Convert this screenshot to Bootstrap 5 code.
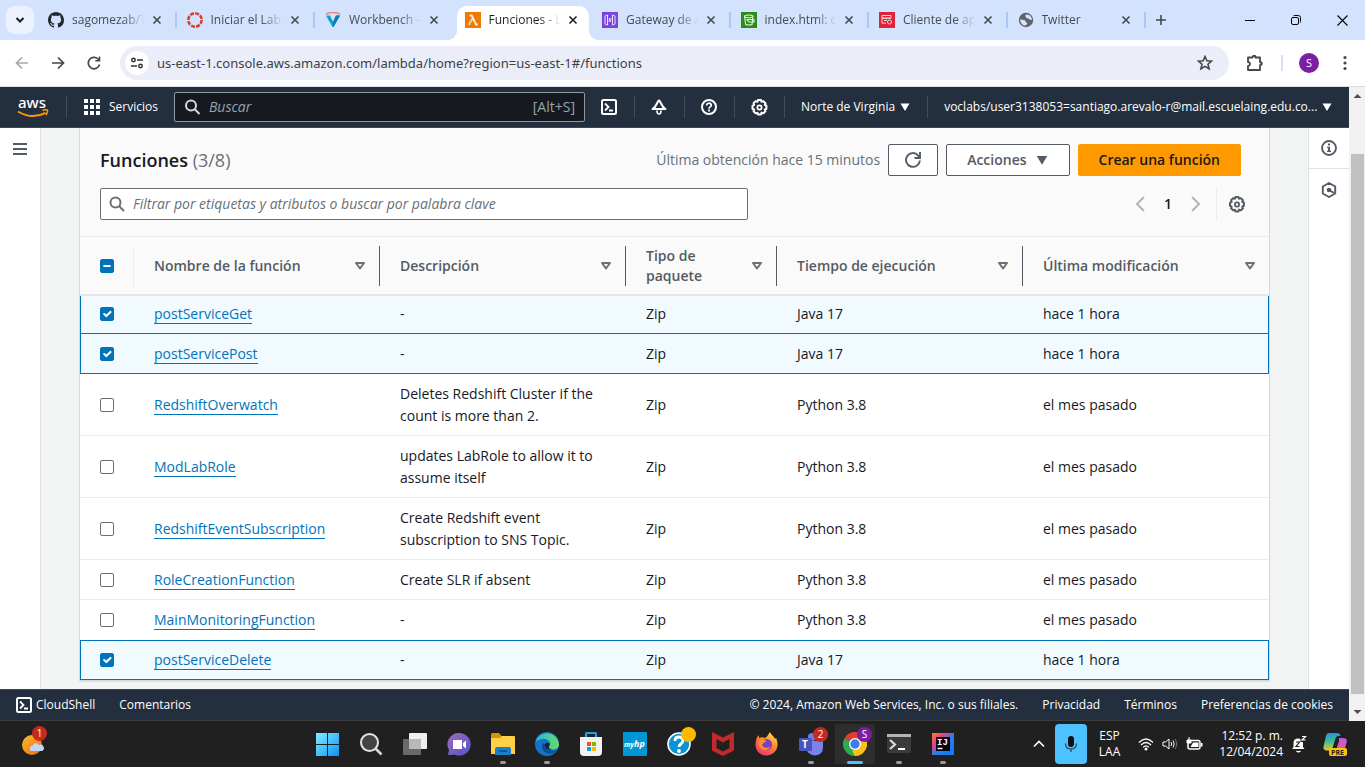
<!DOCTYPE html>
<html lang="es">
<head>
<meta charset="utf-8">
<meta name="viewport" content="width=device-width, initial-scale=1">
<title>Funciones - Lambda</title>
<link rel="stylesheet" href="https://cdn.jsdelivr.net/npm/bootstrap@5.3.0/dist/css/bootstrap.min.css">
<style>
  :root { --squid:#232f3e; --blue:#0073bb; --grey:#545b64; --ink:#16191f; --line:#eaeded; }
  body { font-family:"Open Sans","Noto Sans",sans-serif; font-size:14px; line-height:22px; color:var(--ink); background:#fff; }
  svg { display:block; flex:none; }
  button { color:inherit; }
  .plain { border:0; background:none; padding:0; display:flex; align-items:center; justify-content:center; flex:none; }

  /* browser tabs */
  .tabstrip { height:40px; background:#d3e3fd; font-size:12px; }
  .tab-search { width:28px; height:28px; border-radius:9px; background:#ebf2fe; margin:0 6px; }
  .tabs { display:grid; grid-template-columns:repeat(8,minmax(0,1fr)); min-width:0; }
  .tab-item { height:16px; padding:0 8px; margin-right:2px; border-right:2px solid transparent; position:relative; color:#474b50; }
  .tab-item.sep { border-right-color:#a8c7fa; }
  .tab-item .title { flex:1; min-width:0; margin-left:8px; overflow:hidden; white-space:nowrap; -webkit-mask-image:linear-gradient(90deg,#000 66%,transparent 94%); mask-image:linear-gradient(90deg,#000 66%,transparent 94%); line-height:20px; }
  .tab-item .closer { width:16px; height:16px; margin-right:2px; color:#45494d; }
  .tab-item.current { background:#fff; height:34px; align-self:flex-end; border:0; border-radius:10px 10px 0 0; padding-bottom:6px; color:#1f2023; margin:0 5px 0 1px; }
  .tab-item.current .closer { margin-right:0; color:#1f2023; }
  .tab-item.current::before, .tab-item.current::after { content:""; position:absolute; bottom:0; width:10px; height:10px; }
  .tab-item.current::before { right:100%; background:radial-gradient(circle at 0 0,transparent 10px,#fff 10px); }
  .tab-item.current::after { left:100%; background:radial-gradient(circle at 100% 0,transparent 10px,#fff 10px); }
  .win-tools { width:217px; flex:none; }
  .win-btn { width:46px; height:40px; color:#000; }

  /* address bar */
  .addressbar { height:47px; border-bottom:1px solid #dadce0; padding:0 10px 0 4px; }
  .nav-btn { width:36px; height:34px; color:#474747; }
  .omnibox { height:34px; border-radius:17px; background:#ebeef8; margin-left:8px; padding:0 16px 0 5px; min-width:0; }
  .site-info { width:24px; height:24px; border-radius:50%; background:#fff; margin-right:8px; }
  .url { border:0; background:none; outline:0; flex:1; min-width:0; padding:0; font-family:"Noto Sans",sans-serif; font-size:13px; color:#3c3f45; }
  .bar-rule { width:2px; height:16px; background:#d3e3fd; }
  .avatar { width:20px; height:20px; border-radius:50%; background:#7b1fa2; color:#fff; font-size:11px; line-height:20px; }

  /* console header and footer */
  .aws-bar { height:41px; background:var(--squid); color:#fff; font-size:12px; border-bottom:1px solid #414750; }
  .aws-bar .plain { font-weight:500; }
  .aws-bar .rule { width:1px; height:22px; background:#414d5c; flex:none; }
  .aws-bar .tool { width:49px; }
  .aws-search { width:411px; flex:none; height:30px; background:#161a20; border:1px solid #8d9ba0; border-radius:2px; padding:0 9px; color:#95a5a6; font-size:14px; }
  .aws-search input { background:none; border:0; outline:0; color:inherit; flex:1; min-width:0; padding:0; }
  .aws-search input::placeholder, .filter input::placeholder { font-style:italic; color:inherit; opacity:1; }
  .aws-foot { height:32px; background:var(--squid); border-top:1px solid #414750; border-bottom:1px solid #3b3b3b; color:#fff; font-size:12px; font-weight:500; padding:0 16px; }
  .aws-foot a, .aws-foot button { color:#fff; text-decoration:none; font-weight:500; }

  /* console body */
  .rail { width:41px; flex:none; color:var(--grey); }
  .rail .plain { width:100%; height:41px; }
  .canvas { background:#f2f3f3; padding:0 39px; min-width:0; }
  .panel { background:#fff; box-shadow:0 0 0 1px #d5dbdb,0 1px 1px 0 rgba(0,28,36,.5); }
  .panel-top { background:#fafafa; border-bottom:1px solid var(--line); padding:16px 20px; }
  .panel-top h1 { font-size:18px; line-height:22px; font-weight:600; margin:0; }
  .panel-top h1 span { font-weight:400; color:#687078; }
  .panel-top .fetched { color:#687078; }
  .panel-row { margin-bottom:12px; }
  .aws-btn { height:32px; border:1px solid var(--grey); border-radius:2px; background:#fff; color:var(--grey); font-size:14px; font-weight:600; line-height:20px; padding:0 20px; }
  .aws-btn.icon-only { padding:0 16px; }
  .aws-btn.main-action { background:#f90; border-color:#f90; color:var(--ink); }
  .filter { width:648px; height:32px; border:1px solid #687078; border-radius:2px; background:#fff; padding:0 8px; color:#687078; }
  .filter input { border:0; outline:0; flex:1; min-width:0; padding:0; background:none; color:inherit; }
  .pager { gap:14px; }
  .pager .pages { gap:18px; }
  .pager .rule { width:1px; height:32px; background:var(--line); }

  .fn-table { width:100%; table-layout:fixed; border-collapse:separate; border-spacing:0; }
  .fn-table th { background:#fafafa; color:var(--grey); font-weight:600; line-height:20px; height:59px; padding:9px 0 8px; border-bottom:2px solid #e4e7e7; }
  .fn-table th > div { height:40px; padding:0 13px 0 20px; border-right:1px solid var(--grey); }
  .fn-table th:first-child > div { border-color:var(--line); }
  .fn-table th:last-child > div { border:0; }
  .fn-table td { padding:9px 20px 8px; border-bottom:1px solid var(--line); vertical-align:middle; }
  .fn-table td:first-child { padding-right:0; }
  .fn-table tr.picked td { background:#f1faff; border-bottom-color:var(--blue); }
  .fn-table tr.picked td:first-child { border-left:1px solid var(--blue); padding-left:19px; }
  .fn-table tr.picked td:last-child { border-right:1px solid var(--blue); }
  .fn-table tbody tr:first-child td { padding-top:7px; }
  .fn-table tr.before-picked td { border-bottom:0; padding-bottom:9px; }
  .fn-table tr.before-picked + tr td { border-top:1px solid var(--blue); padding-top:8px; }
  .fn-table td a { color:var(--blue); text-decoration:none; border-bottom:1px solid var(--blue); }
  .fn-table .form-check-input { display:block; width:14px; height:14px; margin:0; border:1px solid #687078; border-radius:2px; box-shadow:none; }
  .fn-table .form-check-input:checked, .fn-table .form-check-input:indeterminate { background-color:var(--blue); border-color:var(--blue); background-size:14px 14px; }

  .scrollbar-col { width:16px; flex:none; background:#f1f1f1; }
  .scrollbar-col .above { flex:50 0 0; }
  .scrollbar-col .below { flex:10 0 0; }
  .scrollbar-col .thumb { flex:539 0 0; margin:0 1px 0 2px; background:#c1c1c1; }

  /* taskbar */
  .taskbar { height:46px; background:#202020; color:#fff; font-size:12px; line-height:16px; }
  .zone-start { flex:305 1 0; }
  .zone-end { flex:400 0 0; }
  .weather { margin-left:22px; }
  .app { width:44px; height:46px; position:relative; }
  .app.open::after { content:""; position:absolute; bottom:3px; left:19px; width:6px; height:3px; border-radius:2px; background:#9a9a9a; }
  .app.active { background:linear-gradient(#2d2d2d,#2d2d2d) center/40px 40px no-repeat; }
  .app.active::after { left:14px; width:16px; background:#4cc2ff; }
  .pin { position:absolute; border-radius:50%; width:15px; height:15px; font-size:10px; line-height:15px; text-align:center; color:#fff; top:6px; right:5px; }
  .pin.alert-red { background:#c42b1c; }
  .pin.yellow { background:#ffb900; }
  .pin.violet { background:#7b1fa2; }
  .weather .pin { top:-6px; right:-1px; }
  .mic { width:32px; height:40px; border-radius:4px; background:#4cc2ff; margin:0 12px 0 10px; }
  .status { margin:0 16px 0 18px; }
  .snooze { margin:0 16px 0 8px; }
  .copilot { margin-right:18px; }
</style>
</head>
<body class="d-flex flex-column vh-100 overflow-hidden">

<svg width="0" height="0" class="position-absolute">
  <symbol id="x" viewBox="0 0 16 16"><path d="M4.500 4.500l7 7M11.500 4.500l-7 7" stroke="currentColor" stroke-width="1.600" fill="none"/></symbol>
  <symbol id="down" viewBox="0 0 12 10"><path d="M1.500 1.500h9L6 9z" fill="currentColor"/></symbol>
  <symbol id="sort" viewBox="0 0 12 10"><path d="M2 2h8L6 7.500z" fill="none" stroke="#687078" stroke-width="2" stroke-linejoin="round"/></symbol>
  <symbol id="lens" viewBox="0 0 16 16"><circle cx="6.500" cy="6.500" r="5" fill="none" stroke="currentColor" stroke-width="2"/><path d="M10 10l5 5" stroke="currentColor" stroke-width="2"/></symbol>
  <symbol id="gear" viewBox="0 0 16 16"><path d="M6.600 1h2.800l.5 1.600 1.700-.6 2 2-.7 1.500 1.600.8v2.900l-1.600.8.7 1.500-2 2-1.700-.7-.5 1.700H6.600L6 12.900l-1.600.6-2-2L3 10l-1.600-.8V6.400L3 5.600 2.400 4l2-2 1.700.6z" fill="none" stroke="currentColor" stroke-width="1.900" stroke-linejoin="round"/><circle cx="8" cy="8" r="2" fill="none" stroke="currentColor" stroke-width="1.600"/></symbol>
  <symbol id="shell" viewBox="0 0 16 16"><rect x="1" y="1" width="14" height="14" rx="1.500" fill="none" stroke="currentColor" stroke-width="2"/><path d="M4 4.500L7.500 8 4 11.500M8 11.500h4" fill="none" stroke="currentColor" stroke-width="1.800"/></symbol>
</svg>

<header>
  <div class="tabstrip d-flex align-items-center">
    <button class="plain tab-search" aria-label="Buscar pestañas"><svg width="12" height="12" viewBox="0 0 12 12"><path d="M2.500 4L6 7.500 9.500 4" fill="none" stroke="#1f1f1f" stroke-width="2"/></svg></button>
    <div class="tabs align-items-center flex-grow-1 h-100">
      <div class="tab-item sep d-flex align-items-center">
        <svg width="16" height="16" viewBox="0 0 16 16"><path fill="#24292f" d="M8 0C3.580 0 0 3.580 0 8c0 3.540 2.290 6.530 5.470 7.590.4.070.55-.17.55-.38 0-.19-.01-.82-.01-1.490-2.010.37-2.530-.49-2.690-.94-.09-.23-.48-.94-.82-1.130-.28-.15-.68-.52-.01-.53.63-.01 1.080.58 1.230.82.72 1.210 1.870.87 2.330.66.070-.52.28-.87.51-1.070-1.780-.2-3.640-.89-3.640-3.950 0-.87.31-1.590.82-2.150-.08-.2-.36-1.020.08-2.120 0 0 .67-.21 2.200.82.64-.18 1.320-.27 2-.27s1.360.09 2 .27c1.530-1.040 2.200-.82 2.200-.82.44 1.100.16 1.920.08 2.120.51.56.82 1.270.82 2.150 0 3.070-1.870 3.750-3.650 3.950.29.25.54.73.54 1.480 0 1.070-.01 1.930-.01 2.200 0 .21.15.46.55.38A8.010 8.010 0 0 0 16 8c0-4.420-3.580-8-8-8z"/></svg>
        <span class="title">sagomezab/T</span><button class="plain closer" aria-label="Cerrar"><svg width="16" height="16"><use href="#x"/></svg></button>
      </div>
      <div class="tab-item sep d-flex align-items-center">
        <svg width="16" height="16" viewBox="0 0 16 16"><circle cx="8" cy="8" r="6.700" fill="none" stroke="#e13b30" stroke-width="2.600" stroke-dasharray="4 1.260"/></svg>
        <span class="title">Iniciar el Lab</span><button class="plain closer" aria-label="Cerrar"><svg width="16" height="16"><use href="#x"/></svg></button>
      </div>
      <div class="tab-item d-flex align-items-center">
        <svg width="16" height="16" viewBox="0 0 16 16"><path d="M1 2Q8-1 15 2" stroke="#f4845f" stroke-width="1.500" fill="none"/><path d="M1 3.500h4L8 10l3-6.500h4L8.500 15h-1z" fill="#0aa0d6"/><path d="M8 10l3-6.500h4L8.500 15H8z" fill="#0b7fae"/></svg>
        <span class="title">Workbench -</span><button class="plain closer" aria-label="Cerrar"><svg width="16" height="16"><use href="#x"/></svg></button>
      </div>
      <div class="tab-item current d-flex align-items-center">
        <svg width="16" height="16" viewBox="0 0 16 16"><path fill="#ee7a05" d="M0 0h16v16H0z"/><path d="M4.500 3.500h2.200L11 12.500h1.800M7.300 7L4 12.800" fill="none" stroke="#ffe9d0" stroke-width="2"/><path d="M7.300 8.200L4.800 12.500" stroke="#ee7a05" stroke-width=".7"/></svg>
        <span class="title">Funciones - L</span><button class="plain closer" aria-label="Cerrar"><svg width="16" height="16"><use href="#x"/></svg></button>
      </div>
      <div class="tab-item sep d-flex align-items-center">
        <svg width="16" height="16" viewBox="0 0 16 16"><path fill="#7a45dc" d="M0 0h16v16H0z"/><path d="M5.500 3L3 4v8l2.500 1zM10.500 3L13 4v8l-2.500 1zM7.500 6l-.5 4M9 6l-.5 4" fill="none" stroke="#e6d9ff" stroke-width="1"/></svg>
        <span class="title">Gateway de A</span><button class="plain closer" aria-label="Cerrar"><svg width="16" height="16"><use href="#x"/></svg></button>
      </div>
      <div class="tab-item sep d-flex align-items-center">
        <svg width="16" height="16" viewBox="0 0 16 16"><path fill="#2f8a1e" d="M0 0h16v16H0z"/><path d="M3.500 4q4.500-2 8.500 0l-1 8.500q-3 1-6.300 0zM3.500 5q4.500 1.500 8.500 0M6 7.500h7v2.500H8z" fill="none" stroke="#e4f5d8" stroke-width="1.100"/></svg>
        <span class="title">index.html: c</span><button class="plain closer" aria-label="Cerrar"><svg width="16" height="16"><use href="#x"/></svg></button>
      </div>
      <div class="tab-item sep d-flex align-items-center">
        <svg width="16" height="16" viewBox="0 0 16 16"><path fill="#dd2438" d="M0 0h16v16H0z"/><path d="M3 3.500h9v2.700H3zM3 6.200v5h4M5 8.500h3M3 6.200h9" fill="none" stroke="#ffd0d4" stroke-width="1"/><circle cx="10.500" cy="10" r="2" fill="none" stroke="#ffd0d4"/></svg>
        <span class="title">Cliente de ap</span><button class="plain closer" aria-label="Cerrar"><svg width="16" height="16"><use href="#x"/></svg></button>
      </div>
      <div class="tab-item sep d-flex align-items-center">
        <svg width="16" height="16" viewBox="0 0 16 16"><circle cx="8" cy="8" r="7.200" fill="#5f6368"/><path d="M2 7.500c2 0 3 .5 4.500.5 1.500.5.500 2 2 2.500S9 13 7 13.500c-2.500 0-4.500-2.500-5-6zM8 2.500c-1.500 1.500 0 2 0 3 1 1.500 3 .5 3.500 2l2.500.500c0-2.500-1.500-4.500-3.500-5.300z" fill="#d3e3fd"/></svg>
        <span class="title">Twitter</span><button class="plain closer" aria-label="Cerrar"><svg width="16" height="16"><use href="#x"/></svg></button>
      </div>
    </div>
    <div class="win-tools d-flex align-items-center justify-content-between">
      <button class="plain ms-1" aria-label="Nueva pestaña"><svg width="18" height="16" viewBox="0 0 18 16"><path d="M9 3v10M4 8h10" stroke="#474747" stroke-width="1.600"/></svg></button>
      <div class="d-flex">
        <button class="plain win-btn" aria-label="Minimizar"><svg width="10" height="10"><path d="M0 5.500h10" stroke="#000"/></svg></button>
        <button class="plain win-btn" aria-label="Restaurar"><svg width="10" height="10" viewBox="0 0 10 10"><rect x=".5" y="2.500" width="7" height="7" rx="1.500" fill="none" stroke="#000"/><path d="M2.500 1c0-.3.300-.5.800-.5h4A2.200 2.200 0 0 1 9.500 2.700v4c0 .5-.2.800-.5.800" fill="none" stroke="#000"/></svg></button>
        <button class="plain win-btn" aria-label="Cerrar ventana"><svg width="11" height="11"><path d="M.5.5l10 10M10.500.5l-10 10" stroke="#000" stroke-width="1.100"/></svg></button>
      </div>
    </div>
  </div>

  <div class="addressbar d-flex align-items-center">
    <button class="plain nav-btn" aria-label="Atrás"><svg width="16" height="16" viewBox="0 0 16 16"><path d="M14 8H3M8 2.500L2.500 8 8 13.500" fill="none" stroke="#a7a9ad" stroke-width="1.700"/></svg></button>
    <button class="plain nav-btn" aria-label="Adelante"><svg width="16" height="16" viewBox="0 0 16 16"><path d="M2 8h11M8 2.500L13.500 8 8 13.500" fill="none" stroke="currentColor" stroke-width="1.700"/></svg></button>
    <button class="plain nav-btn" aria-label="Recargar"><svg width="16" height="16" viewBox="0 0 16 16"><path d="M13.500 9.500A5.700 5.700 0 1 1 12 4l1.500 1.500" fill="none" stroke="currentColor" stroke-width="1.700"/><path d="M14.300 1.500v5H9.300V5h3.400V1.500z" fill="currentColor"/></svg></button>
    <div class="omnibox d-flex align-items-center flex-grow-1">
      <button class="plain site-info" aria-label="Información del sitio"><svg width="14" height="14" viewBox="0 0 14 14"><g fill="none" stroke="#303030" stroke-width="1.500"><circle cx="3.500" cy="4" r="1.700"/><path d="M7 4h6M1 10h6"/><circle cx="10.500" cy="10" r="1.700"/></g></svg></button>
      <input class="url" type="text" aria-label="Dirección" value="us-east-1.console.aws.amazon.com/lambda/home?region=us-east-1#/functions">
      <button class="plain" aria-label="Marcador"><svg width="16" height="16" viewBox="0 0 16 16"><path d="M8 1.500l1.900 4.300 4.700.4-3.600 3 1.100 4.600L8 11.400l-4.100 2.400L5 9.200l-3.600-3 4.700-.4z" fill="none" stroke="#474747" stroke-width="1.600"/></svg></button>
    </div>
    <button class="plain ms-3" aria-label="Extensiones"><svg width="20" height="18" viewBox="0 0 20 18"><path d="M3 3.500h4.500a1.500 1.500 0 0 1 3 0H15V8a1.600 1.600 0 0 1 0 3.200V16H3v-4a2 2 0 0 0 0-4z" fill="none" stroke="#474747" stroke-width="1.800" stroke-linejoin="round"/><path d="M7.500 3a2 2 0 0 1 4 0zM15.500 7.500a2 2 0 0 1 0 4z" fill="#474747"/></svg></button>
    <span class="bar-rule ms-3 me-3"></span>
    <button class="plain avatar" aria-label="Perfil">S</button>
    <button class="plain ms-3" aria-label="Menú"><svg width="20" height="16" viewBox="0 0 20 16"><g fill="#474747"><circle cx="10" cy="2.500" r="1.600"/><circle cx="10" cy="8" r="1.600"/><circle cx="10" cy="13.500" r="1.600"/></g></svg></button>
  </div>
</header>

<div class="d-flex flex-grow-1 overflow-hidden">
  <div class="d-flex flex-column flex-grow-1 overflow-hidden">
    <nav class="aws-bar d-flex align-items-center flex-shrink-0">
      <a href="#" aria-label="AWS" class="ms-3"><svg width="34" height="30" viewBox="0 -4 34 30" font-family="Noto Sans" font-weight="500"><text x="2" y="12" font-size="15" fill="#fff">aws</text><path d="M2 15.500Q16 24 29.500 16.800" fill="none" stroke="#f90" stroke-width="2"/><path d="M26.500 14.200q4.500-1 5 0t-1.500 5" fill="none" stroke="#f90" stroke-width="1.600"/></svg></a>
      <span class="rule ms-3"></span>
      <button class="plain gap-2 ms-3"><svg width="18" height="16" viewBox="0 0 18 16"><path fill="#fff" d="M1 0h4v4H1zM7 0h4v4H7zM13 0h4v4h-4zM1 6h4v4H1zM7 6h4v4H7zM13 6h4v4h-4zM1 12h4v4H1zM7 12h4v4H7zM13 12h4v4h-4z"/></svg>Servicios</button>
      <label class="aws-search d-flex align-items-center gap-2 ms-3"><svg width="17" height="16" color="#d5dbdb"><use href="#lens"/></svg><input type="search" placeholder="Buscar" aria-label="Buscar"><span>[Alt+S]</span></label>
      <button class="plain tool" aria-label="CloudShell"><svg width="16" height="16"><use href="#shell"/></svg></button><span class="rule"></span>
      <button class="plain tool" aria-label="Notificaciones"><svg width="18" height="18" viewBox="0 0 18 18"><path d="M9 2.500c2 .8 2 6 6.500 8.500h-13C7 8.500 7 3.300 9 2.500z" fill="none" stroke="#fff" stroke-width="2" stroke-linejoin="round"/><path d="M7 12.500q0 3.500 2 3.500t2-3.500" fill="none" stroke="#fff" stroke-width="1.600"/></svg></button><span class="rule"></span>
      <button class="plain tool" aria-label="Ayuda"><svg width="16" height="16" viewBox="0 0 16 16"><circle cx="8" cy="8" r="7" fill="none" stroke="#fff" stroke-width="2"/><path d="M5.700 6.500C5.700 3.500 10.300 3.500 10.300 6.300 10.300 8 8 7.800 8 9.700" fill="none" stroke="#fff" stroke-width="1.700"/><path d="M7.100 10.600h1.800v1.800H7.100z" fill="#fff"/></svg></button><span class="rule"></span>
      <button class="plain tool" aria-label="Configuración"><svg width="17" height="17"><use href="#gear"/></svg></button><span class="rule"></span>
      <button class="plain gap-1 ms-3">Norte de Virginia <svg width="12" height="10"><use href="#down"/></svg></button>
      <span class="rule ms-3 me-3"></span>
      <button class="plain gap-1">voclabs/user3138053=santiago.arevalo-r@mail.escuelaing.edu.co... <svg width="12" height="10"><use href="#down"/></svg></button>
    </nav>

    <div class="d-flex flex-grow-1 overflow-hidden">
      <aside class="rail border-end">
        <button class="plain" aria-label="Menú"><svg width="14" height="12" viewBox="0 0 14 12"><path d="M0 1h14M0 6h14M0 11h14" stroke="#545b64" stroke-width="2"/></svg></button>
      </aside>
      <main class="canvas flex-grow-1">
        <section class="panel">
          <div class="panel-top">
            <div class="panel-row d-flex align-items-center gap-2 me-2">
              <h1 class="me-auto">Funciones <span>(3/8)</span></h1>
              <span class="fetched text-nowrap">Última obtención hace 15 minutos</span>
              <button class="plain aws-btn icon-only" aria-label="Actualizar"><svg width="16" height="16" viewBox="0 0 16 16"><path d="M14.800 8.500A6.900 6.900 0 1 1 13 3.300l1.300 1.500" fill="none" stroke="#545b64" stroke-width="1.900"/><path d="M15 0v6H9.500" fill="none" stroke="#545b64" stroke-width="1.900"/></svg></button>
              <button class="plain aws-btn gap-2">Acciones <svg width="14" height="12"><use href="#down"/></svg></button>
              <button class="plain aws-btn main-action">Crear una función</button>
            </div>
            <div class="d-flex align-items-center justify-content-between">
              <label class="filter d-flex align-items-center gap-2"><svg width="16" height="16"><use href="#lens"/></svg><input type="search" placeholder="Filtrar por etiquetas y atributos o buscar por palabra clave" aria-label="Filtrar funciones"></label>
              <div class="pager d-flex align-items-center">
                <div class="pages d-flex align-items-center">
                  <button class="plain" aria-label="Anterior"><svg width="12" height="16" viewBox="0 0 12 16"><path d="M10 1L3 8l7 7" fill="none" stroke="#aab7b8" stroke-width="1.900"/></svg></button>
                  <button class="plain fw-semibold" aria-current="page">1</button>
                  <button class="plain" aria-label="Siguiente"><svg width="12" height="16" viewBox="0 0 12 16"><path d="M2 1l7 7-7 7" fill="none" stroke="#aab7b8" stroke-width="1.900"/></svg></button>
                </div>
                <div class="d-flex align-items-center gap-2"><span class="rule"></span>
                <button class="plain" aria-label="Preferencias"><svg width="24" height="17" color="#545b64"><use href="#gear"/></svg></button></div>
              </div>
            </div>
          </div>

          <table class="fn-table">
            <colgroup><col style="width:54px"><col><col><col style="width:151px"><col><col></colgroup>
            <thead>
              <tr>
                <th><div class="d-flex align-items-center"><input class="form-check-input" type="checkbox" id="all" aria-label="Seleccionar todo"></div></th>
                <th><div class="d-flex align-items-center justify-content-between">Nombre de la función<svg width="12" height="10"><use href="#sort"/></svg></div></th>
                <th><div class="d-flex align-items-center justify-content-between">Descripción<svg width="12" height="10"><use href="#sort"/></svg></div></th>
                <th><div class="d-flex align-items-center justify-content-between"><span>Tipo de<br>paquete</span><svg width="12" height="10"><use href="#sort"/></svg></div></th>
                <th><div class="d-flex align-items-center justify-content-between">Tiempo de ejecución<svg width="12" height="10"><use href="#sort"/></svg></div></th>
                <th><div class="d-flex align-items-center justify-content-between">Última modificación<svg width="12" height="10"><use href="#sort"/></svg></div></th>
              </tr>
            </thead>
            <tbody>
              <tr class="picked"><td><input class="form-check-input" type="checkbox" checked aria-label="postServiceGet"></td><td><a href="#">postServiceGet</a></td><td>-</td><td>Zip</td><td>Java 17</td><td>hace 1 hora</td></tr>
              <tr class="picked"><td><input class="form-check-input" type="checkbox" checked aria-label="postServicePost"></td><td><a href="#">postServicePost</a></td><td>-</td><td>Zip</td><td>Java 17</td><td>hace 1 hora</td></tr>
              <tr><td><input class="form-check-input" type="checkbox" aria-label="RedshiftOverwatch"></td><td><a href="#">RedshiftOverwatch</a></td><td>Deletes Redshift Cluster if the count is more than 2.</td><td>Zip</td><td>Python 3.8</td><td>el mes pasado</td></tr>
              <tr><td><input class="form-check-input" type="checkbox" aria-label="ModLabRole"></td><td><a href="#">ModLabRole</a></td><td>updates LabRole to allow it to assume itself</td><td>Zip</td><td>Python 3.8</td><td>el mes pasado</td></tr>
              <tr><td><input class="form-check-input" type="checkbox" aria-label="RedshiftEventSubscription"></td><td><a href="#">RedshiftEventSubscription</a></td><td>Create Redshift event subscription to SNS Topic.</td><td>Zip</td><td>Python 3.8</td><td>el mes pasado</td></tr>
              <tr><td><input class="form-check-input" type="checkbox" aria-label="RoleCreationFunction"></td><td><a href="#">RoleCreationFunction</a></td><td>Create SLR if absent</td><td>Zip</td><td>Python 3.8</td><td>el mes pasado</td></tr>
              <tr class="before-picked"><td><input class="form-check-input" type="checkbox" aria-label="MainMonitoringFunction"></td><td><a href="#">MainMonitoringFunction</a></td><td>-</td><td>Zip</td><td>Python 3.8</td><td>el mes pasado</td></tr>
              <tr class="picked"><td><input class="form-check-input" type="checkbox" checked aria-label="postServiceDelete"></td><td><a href="#">postServiceDelete</a></td><td>-</td><td>Zip</td><td>Java 17</td><td>hace 1 hora</td></tr>
            </tbody>
          </table>
        </section>
      </main>
      <aside class="rail border-start">
        <button class="plain border-bottom" aria-label="Información"><svg width="16" height="16" viewBox="0 0 16 16"><circle cx="8" cy="8" r="7" fill="none" stroke="currentColor" stroke-width="1.900"/><path d="M7 3.500h2v2H7zM6 6.700h3v4h1v1.400H6v-1.400h1V8H6z" fill="currentColor"/></svg></button>
        <button class="plain" aria-label="Tutoriales"><svg width="16" height="16" viewBox="0 0 16 16"><path d="M8 1l6.200 3.500v7L8 15l-6.200-3.500v-7z" fill="none" stroke="currentColor" stroke-width="1.900" stroke-linejoin="round"/><circle cx="8" cy="8" r="2.300" fill="currentColor"/><path d="M8 8l5 3" stroke="currentColor" stroke-width="1.900"/></svg></button>
      </aside>
    </div>

    <footer class="aws-foot d-flex align-items-center flex-shrink-0">
      <button class="plain gap-1"><svg width="16" height="16"><use href="#shell"/></svg>CloudShell</button>
      <a href="#" class="ms-4 me-auto">Comentarios</a>
      <span>© 2024, Amazon Web Services, Inc. o sus filiales.</span>
      <a href="#" class="ms-4">Privacidad</a>
      <a href="#" class="ms-4">Términos</a>
      <a href="#" class="ms-4">Preferencias de cookies</a>
    </footer>
  </div>
  <div class="scrollbar-col d-flex flex-column align-items-stretch" aria-hidden="true">
    <svg width="16" height="17" viewBox="0 0 16 17"><path d="M4.500 11L8.500 7l4 4z" fill="#505050"/></svg>
    <span class="above"></span><span class="thumb"></span><span class="below"></span>
    <svg width="16" height="17" viewBox="0 0 16 17"><path d="M4.500 6L8.500 10l4-4z" fill="#505050"/></svg>
  </div>
</div>

<div class="taskbar d-flex align-items-center flex-shrink-0">
  <div class="zone-start">
    <button class="plain weather position-relative" aria-label="El tiempo"><svg width="24" height="24" viewBox="0 0 24 24"><defs><linearGradient id="sun" x2="1" y2="1"><stop stop-color="#fbbf2e"/><stop offset="1" stop-color="#ea6a10"/></linearGradient></defs><circle cx="10" cy="13" r="10" fill="url(#sun)"/><path d="M10 19a2.500 2.500 0 0 1 .5-5 3.500 3.500 0 0 1 6.500-1 3 3 0 0 1 3 6z" fill="#c3d6f5"/></svg><span class="pin alert-red">1</span></button>
  </div>
  <div class="d-flex">
    <button class="plain app" aria-label="Inicio"><svg width="24" height="24" viewBox="0 0 24 24"><defs><linearGradient id="win" x2="1" y2="1"><stop stop-color="#7df0ff"/><stop offset="1" stop-color="#0f90f5"/></linearGradient></defs><path fill="url(#win)" d="M1 1h11v11H1zM13 1h11v11H13zM1 13h11v11H1zM13 13h11v11H13z"/></svg></button>
    <button class="plain app" aria-label="Buscar"><svg width="24" height="24" viewBox="0 0 24 24"><circle cx="10.500" cy="10.500" r="8.500" fill="#444" stroke="#e4e4e4" stroke-width="2"/><path d="M16.500 16.500l6 6" stroke="#d6d6d6" stroke-width="2.600"/></svg></button>
    <button class="plain app" aria-label="Vista de tareas"><svg width="24" height="24" viewBox="0 0 24 24"><rect x="6" y="1" width="18" height="16" rx="1" fill="#efefef"/><rect y="7" width="18" height="16" rx="1" fill="#6a6a6a"/><path d="M6 7h12v10H6z" fill="#b9b9b9"/></svg></button>
    <button class="plain app" aria-label="Chat"><svg width="24" height="24" viewBox="0 0 24 24"><defs><linearGradient id="chat" x2="1" y2="1"><stop stop-color="#a06ab8"/><stop offset="1" stop-color="#4f55c8"/></linearGradient></defs><path d="M12 1a11.300 11.300 0 1 1-4 21.700L1 23l1-5A11.300 11.300 0 0 1 12 1z" fill="url(#chat)"/><path d="M6 8h9v9H6zM16 11l3-2.500v8L16 14z" fill="#fff"/></svg></button>
    <button class="plain app open" aria-label="Explorador"><svg width="24" height="24" viewBox="0 0 24 24"><path d="M0 2.500q0-1.500 1.500-1.500H8l2.500 3H23v6H0z" fill="#d99400"/><path d="M0 6h9l2-2h12q1 0 1 1v17H0z" fill="#ffcf48"/><path d="M4 23v-6q0-2 2-2h12q2 0 2 2v6z" fill="#1a7fc4"/><path d="M8 19h8" stroke="#0c5a94" stroke-width="2"/></svg></button>
    <button class="plain app open" aria-label="Edge"><svg width="24" height="24" viewBox="0 0 24 24"><defs><linearGradient id="edge" x2="1"><stop stop-color="#27b4e8"/><stop offset="1" stop-color="#69dc61"/></linearGradient></defs><circle cx="12" cy="12" r="12" fill="#1173c9"/><path d="M.5 10A12 12 0 0 1 24 12c0 4-3 5.500-6 5.500-4 0-5-2-3.500-3.700C17 10.500 12 6 7 7 3.500 7.700 1.500 9 .5 10z" fill="url(#edge)"/><path d="M8 11c-3 5 1 11 7 10.500 4-.5 6-2 7-3.500-4 2-10 1.500-10.500-3.500" fill="#0b4c97"/><path d="M9.500 12.500q2-3 5-1 .5 1-.3 2.300-1.700 3 3 3.700-6 1-7.700-5z" fill="#202020"/></svg></button>
    <button class="plain app" aria-label="Microsoft Store"><svg width="24" height="24" viewBox="0 0 24 24"><path d="M7 5V2q0-1 1-1h8q1 0 1 1v3" fill="none" stroke="#18a6e8" stroke-width="2.200"/><path d="M1 5h22v15q0 4-4 4H5q-4 0-4-4z" fill="#f2f2f2"/><path d="M8 10h4v4H8z" fill="#f25022"/><path d="M13 10h4v4h-4z" fill="#7fba00"/><path d="M8 15h4v4H8z" fill="#00a4ef"/><path d="M13 15h4v4h-4z" fill="#ffb900"/></svg></button>
    <button class="plain app" aria-label="myHP"><svg width="24" height="24" viewBox="0 0 24 24" font-family="Noto Sans" font-style="italic" font-weight="700" fill="#fff"><rect width="24" height="24" rx="1" fill="#0096d6"/><text x="1" y="15" font-size="7">my</text><text x="11" y="15" font-size="9">hp</text></svg></button>
    <button class="plain app" aria-label="Ayuda de HP"><svg width="24" height="24" viewBox="0 0 24 24"><circle cx="12" cy="12" r="11" fill="#0a94d6" stroke="#fff" stroke-width="1.600"/><path d="M8 9q0-4 4-4t4 3.500q0 2-2 3.200t-2 3.300" fill="none" stroke="#fff" stroke-width="2.800"/><circle cx="12" cy="19" r="1.900" fill="#fff"/></svg><span class="pin yellow"></span></button>
    <button class="plain app" aria-label="McAfee"><svg width="24" height="24" viewBox="0 0 24 24"><path d="M1 0l11 5.500L23 0v18.500L12 24 1 18.500z" fill="#c22a2a"/><path d="M5.500 7L12 10.500 18.500 7v9L12 19.500 5.500 16z" fill="#202020"/></svg></button>
    <button class="plain app" aria-label="Firefox"><svg width="24" height="24" viewBox="0 0 24 24"><defs><linearGradient id="ff" x1=".8" x2=".2" y2="1"><stop stop-color="#ffe14a"/><stop offset=".5" stop-color="#ff7a2e"/><stop offset="1" stop-color="#f02f7c"/></linearGradient></defs><path d="M15 0c1 3 4 4 5 7l1-1c4 8 0 17-9 17.500S-1 16 1 9c0-2 1-4 3-6v3c2-1 4-1 6 0 2-1 3-3 5-6z" fill="url(#ff)"/><circle cx="11.500" cy="12.500" r="5.500" fill="#7b3fc4"/><path d="M4 8c3-2 6 0 8 1.500-3 0-3 2-5 3 1 4 5 4 8 2-1 4-8 5-11 0" fill="#ff9226"/></svg></button>
    <button class="plain app open" aria-label="Teams"><svg width="26" height="24" viewBox="0 0 26 24"><circle cx="14" cy="5" r="4" fill="#6f7be0"/><path d="M8 9h17v6q0 8-8 8.500Q9 23 8 15z" fill="#7b83eb"/><rect x="1" y="6" width="13" height="13" rx="1" fill="#4b53bc"/><text x="4" y="16" font-family="Open Sans" font-size="10" font-weight="700" fill="#fff">T</text></svg><span class="pin alert-red">2</span></button>
    <button class="plain app open active" aria-label="Chrome"><svg width="24" height="24" viewBox="0 0 24 24"><path d="M12 12L1.600 6A12 12 0 0 1 22.400 6z" fill="#e33b2e"/><path d="M12 12L22.400 6A12 12 0 0 1 12 24z" fill="#fbc116"/><path d="M12 12v12A12 12 0 0 1 1.600 6z" fill="#2da94f"/><path d="M17 15l-5 9-3-5z" fill="#fbc116"/><circle cx="12" cy="12" r="6" fill="#fff"/><circle cx="12" cy="12" r="4.700" fill="#3b7ded"/></svg><span class="pin violet">S</span></button>
    <button class="plain app open" aria-label="Terminal"><svg width="24" height="20" viewBox="0 0 24 20"><rect width="24" height="19" rx="1" fill="#3a3a3a"/><path d="M0 0h24v3H0z" fill="#b5b5b5"/><path d="M3 6l5 4.500L3 15" fill="none" stroke="#ddd" stroke-width="2.200"/><path d="M11 15h7" stroke="#fff" stroke-width="2"/></svg></button>
    <button class="plain app open" aria-label="IntelliJ IDEA"><svg width="24" height="24" viewBox="0 0 24 24"><defs><linearGradient id="ij" x2="1" y2="1"><stop stop-color="#fc801d"/><stop offset=".3" stop-color="#e83f8c"/><stop offset=".55" stop-color="#2b7de9"/><stop offset="1" stop-color="#087cfa"/></linearGradient></defs><path d="M1 1h22v22H1z" fill="url(#ij)"/><path d="M5 5h14v14H5z" fill="#0c0410"/><text x="6" y="13" font-family="Liberation Mono" font-size="9" font-weight="700" fill="#fff">IJ</text><path d="M6.500 16.500h5" stroke="#fff" stroke-width="1.400"/></svg></button>
  </div>
  <div class="zone-end d-flex align-items-center justify-content-end">
    <button class="plain" aria-label="Iconos ocultos"><svg width="12" height="12" viewBox="0 0 12 12"><path d="M1 8.500l5-5 5 5" fill="none" stroke="#fff" stroke-width="1.600"/></svg></button>
    <button class="plain mic" aria-label="Micrófono"><svg width="14" height="18" viewBox="0 0 14 18"><rect x="4" y="1" width="6" height="11" rx="3" fill="#111"/><path d="M1.500 8.500q0 5.500 5.500 5.500t5.500-5.500M7 14v3" fill="none" stroke="#2b5670" stroke-width="1.400"/></svg></button>
    <div class="text-center">ESP<br>LAA</div>
    <div class="status d-flex align-items-center gap-2">
      <svg width="16" height="14" viewBox="0 0 16 14"><g fill="none" stroke="#fff" stroke-width="1.300"><path d="M1 5.500q7-7 14 0M3 8q5-5 10 0M5.200 10.200q2.800-2.600 5.600 0"/></g><circle cx="8" cy="12" r="1.500" fill="#fff"/></svg>
      <svg width="16" height="14" viewBox="0 0 16 14"><path d="M1 5h2.500L7 2v10L3.500 9H1z" fill="none" stroke="#fff"/><path d="M9 5q1.300 2 0 4M11 3.500q2.500 3.500 0 7" fill="none" stroke="#fff"/><path d="M13 2q3.500 5 0 10" fill="none" stroke="#777"/></svg>
      <svg width="17" height="14" viewBox="0 0 17 14"><rect x="2" y="3.500" width="12" height="8.500" rx="2" fill="none" stroke="#fff" stroke-width="1.500"/><path d="M7 5.500h5.500v4.500H4.500zM15 6h1.500v3.500H15z" fill="#fff"/><path d="M3 0v3M1 3h4v3H1z" fill="#fff" stroke="#fff"/></svg>
    </div>
    <div class="text-end text-nowrap">12:52 p. m.<br>12/04/2024</div>
    <svg class="snooze" width="16" height="18" viewBox="0 0 16 18"><path d="M1 14l1.500-2V8q0-4.500 4.500-4.500T12 8v4l1.500 2z" fill="#fff"/><path d="M5.500 16q2 1.500 4 0" stroke="#fff" stroke-width="1.500" fill="none"/><path d="M9.500 0H16v7H9.500z" fill="#202020"/><path d="M5 7h3.500L5 11.500h3.500" fill="none" stroke="#202020" stroke-width="1.200"/><path d="M11 1.500h3.500l-3.500 3.500h3.500" fill="none" stroke="#fff" stroke-width="1.200"/></svg>
    <svg class="copilot" width="24" height="24" viewBox="0 0 24 24"><defs><linearGradient id="cpa" x2="0" y2="1"><stop stop-color="#2a8fe8"/><stop offset=".5" stop-color="#3cc08f"/><stop offset="1" stop-color="#f2c52a"/></linearGradient><linearGradient id="cpb" x2="0" y2="1"><stop stop-color="#b05cf0"/><stop offset="1" stop-color="#f45a80"/></linearGradient></defs><path d="M6 1h8q3 0 3.500 3H15q-2 0-2.700 3L9.500 16q-.8 2.500-3 2.500H4q-5 0-3-6L3 4q.7-3 3-3z" fill="url(#cpa)"/><path d="M16 6h4q5 0 3.500 5L22 16q-1 3-4 3h-7q2 0 2.700-3l2.300-7z" fill="url(#cpb)"/><rect x="6" y="16" width="18" height="8" rx="2" fill="#ffc400"/><text x="8" y="23" font-family="Open Sans" font-size="7" font-weight="700" fill="#222">PRE</text></svg>
  </div>
</div>

<script src="https://cdn.jsdelivr.net/npm/bootstrap@5.3.0/dist/js/bootstrap.bundle.min.js"></script>
<script>
  document.getElementById('all').indeterminate = true;
</script>
</body>
</html>
